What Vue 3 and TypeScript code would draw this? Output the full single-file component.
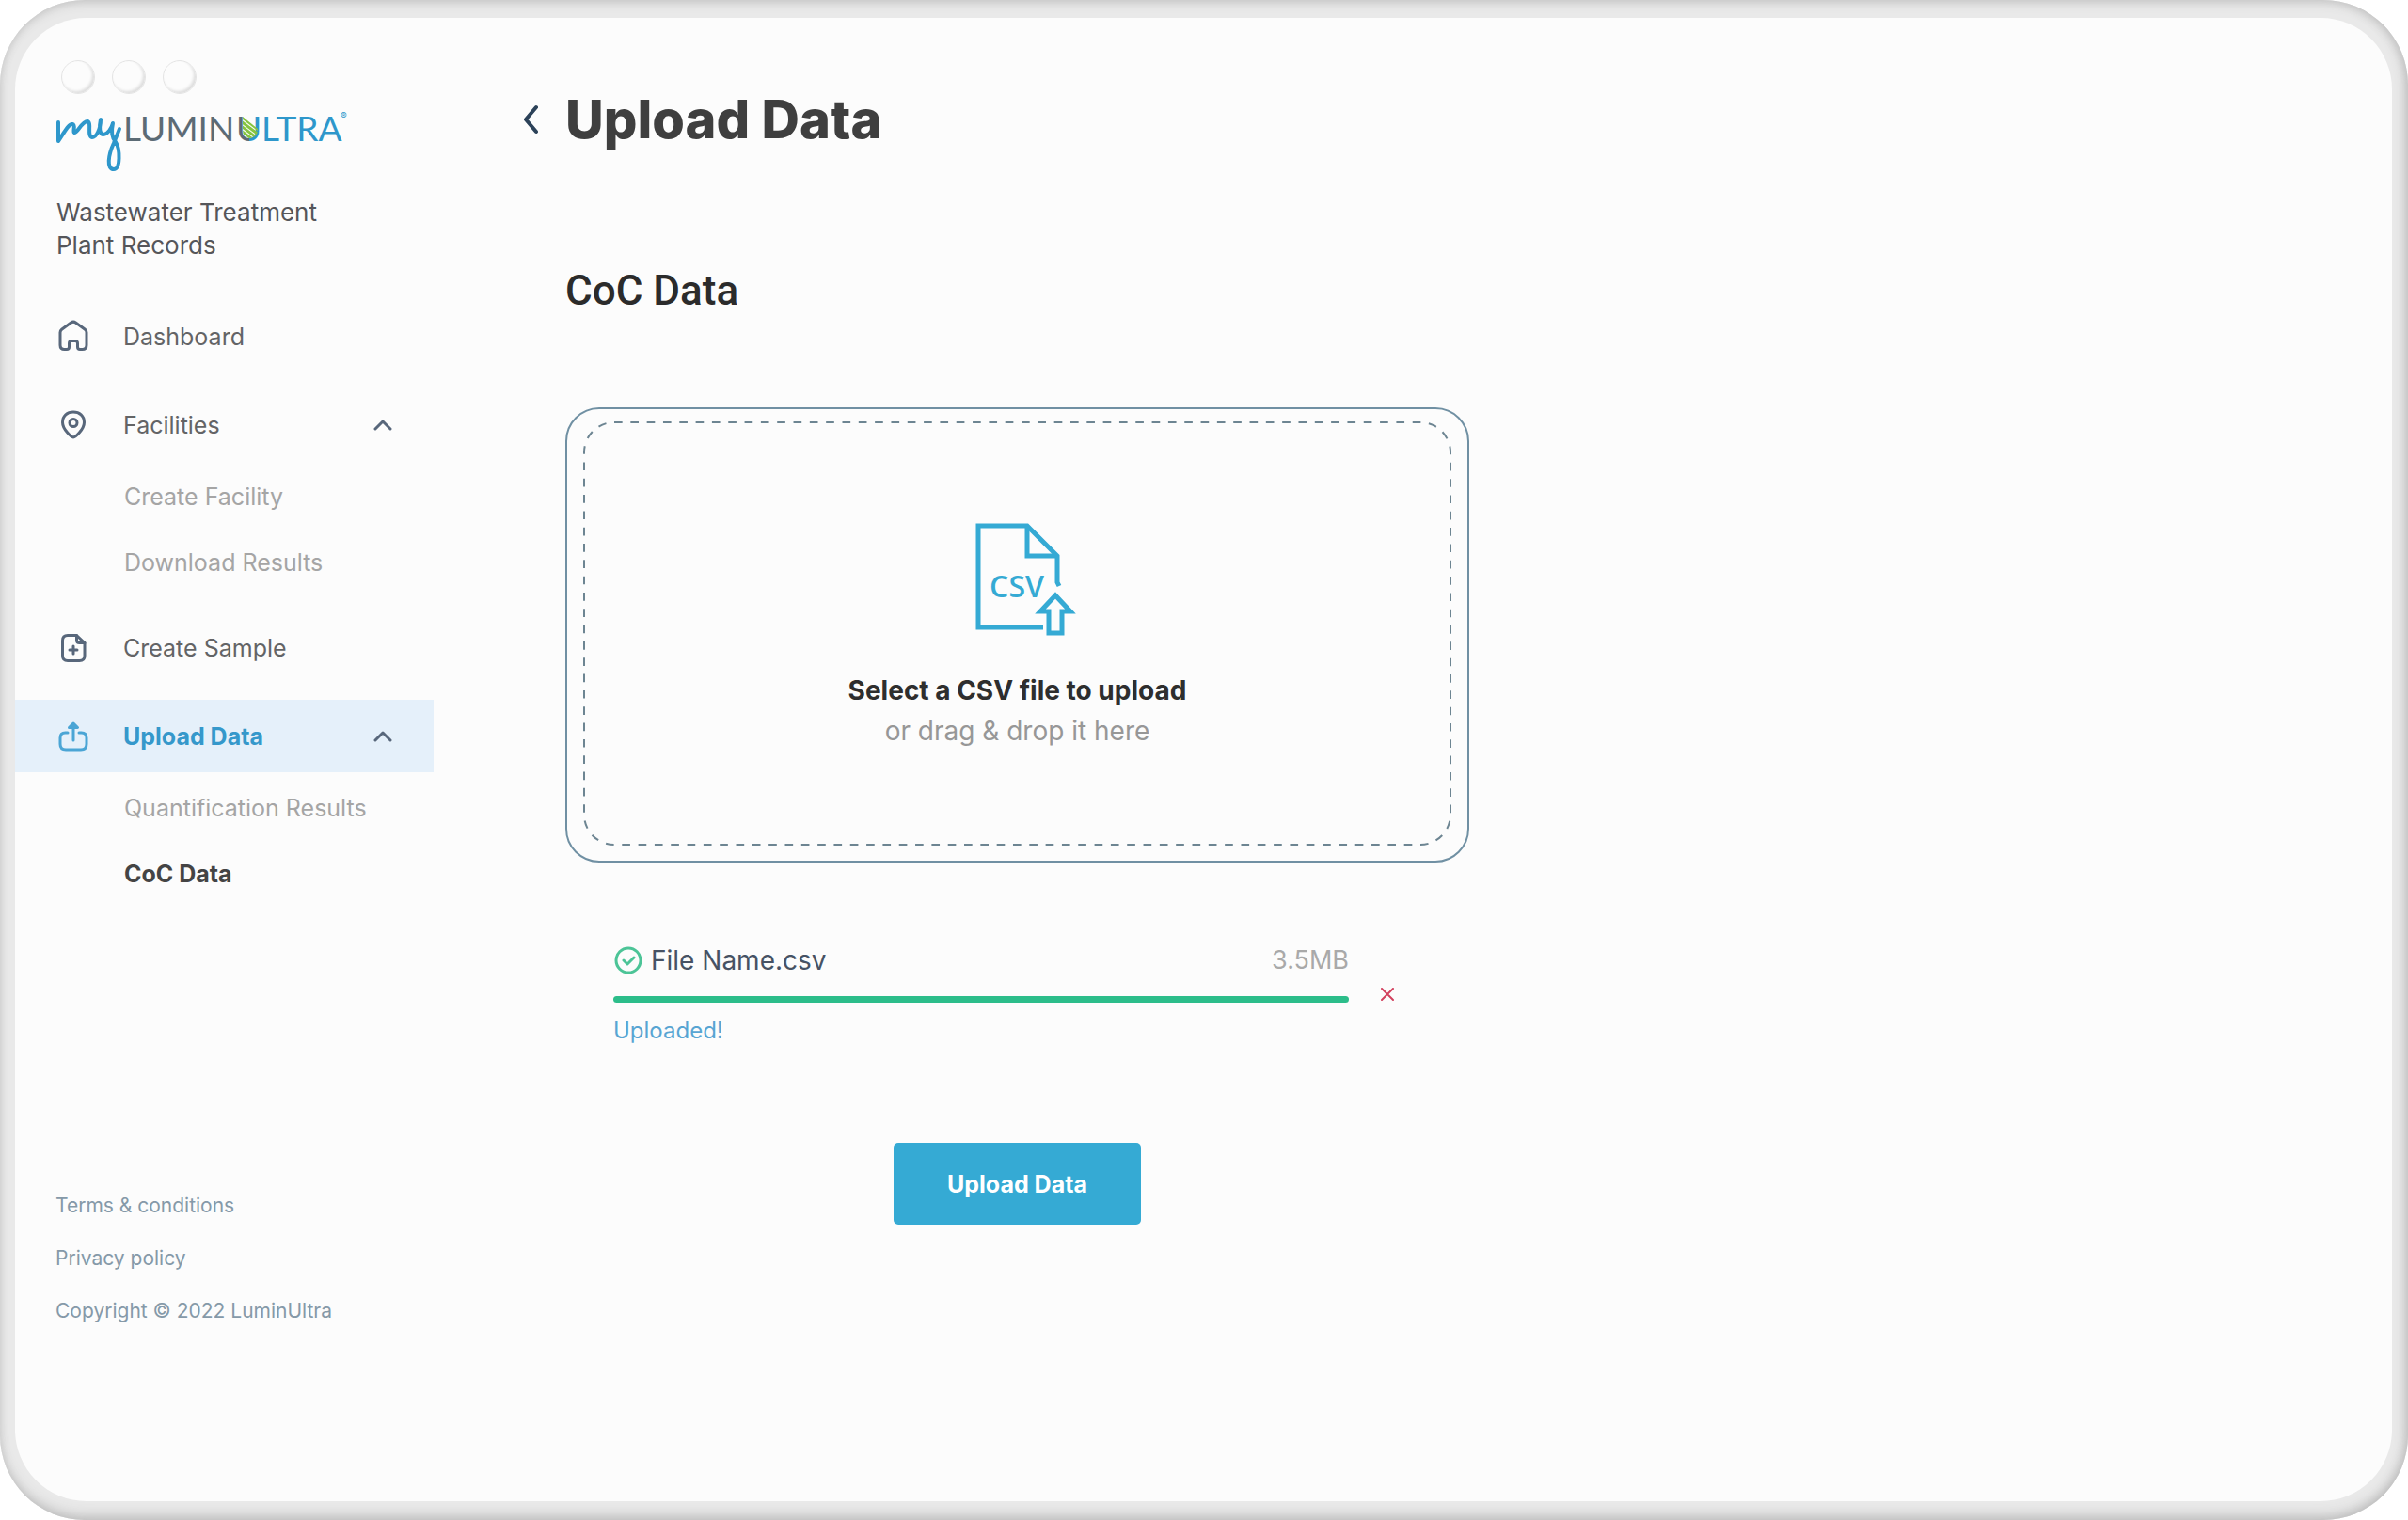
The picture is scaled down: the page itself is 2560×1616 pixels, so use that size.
<script setup lang="ts">
import { ref } from 'vue'

type IconName = 'home' | 'pin' | 'sample' | 'upload'

interface NavItem {
  label: string
  icon: IconName
  active?: boolean
  children?: { label: string; current?: boolean }[]
}

const navItems: NavItem[] = [
  { label: 'Dashboard', icon: 'home' },
  {
    label: 'Facilities',
    icon: 'pin',
    children: [{ label: 'Create Facility' }, { label: 'Download Results' }],
  },
  { label: 'Create Sample', icon: 'sample' },
  {
    label: 'Upload Data',
    icon: 'upload',
    active: true,
    children: [{ label: 'Quantification Results' }, { label: 'CoC Data', current: true }],
  },
]

const open = ref<Record<string, boolean>>({ Facilities: true, 'Upload Data': true })

function toggle(label: string) {
  open.value[label] = !open.value[label]
}

const upload = ref({ name: 'File Name.csv', size: '3.5MB', progress: 100 })
</script>

<template>
  <div class="frame">
    <div class="screen">
      <aside class="sidebar">
        <div class="lights" aria-hidden="true"><i></i><i></i><i></i></div>

        <svg class="logo" viewBox="0 0 320 66" role="img" aria-label="myLuminUltra">
          <defs>
            <linearGradient id="u-fill" x1="0" x2="1" y1="0" y2="0">
              <stop offset="50%" stop-color="#5c6b75" />
              <stop offset="50%" stop-color="#2e97cb" />
            </linearGradient>
            <clipPath id="u-leaf">
              <path d="M199 6 L215 19 V22 Q213 29 206 29 Q199 28 199 20 Z" />
            </clipPath>
          </defs>
          <path
            class="script"
            d="M3 12 V32 C8 25 14 13 18 14 C22 15 18 22 20 23 C23 24 28 11 34 11 C39 12 33 27 39 28 C43 28 48 20 48 9 C46 18 47 25 51 25 C55 25 60 18 61 13 C59 22 60 29 64 33 C69 41 69 62 62 62 C54 62 56 47 62 34 L68 19"
          />
          <text class="word" x="72" y="32" fill="#5c6b75">LUMIN</text>
          <text class="word" x="192" y="32" fill="url(#u-fill)">U</text>
          <text class="word" x="219" y="32" fill="#2e97cb">LTRA</text>
          <g class="leaf" clip-path="url(#u-leaf)">
            <path d="M196 5 L220 23 M196 10 L220 28 M196 15 L220 33 M196 20 L220 38 M196 25 L220 43" />
          </g>
          <text class="mark" x="303" y="9">®</text>
        </svg>

        <p class="org">Wastewater Treatment<br />Plant Records</p>

        <nav class="nav" aria-label="Main">
          <div v-for="item in navItems" :key="item.label" class="group">
            <component
              :is="item.children ? 'button' : 'a'"
              class="row"
              :class="{ active: item.active }"
              :href="item.children ? undefined : '#'"
              :type="item.children ? 'button' : undefined"
              :aria-expanded="item.children ? !!open[item.label] : undefined"
              @click="item.children && toggle(item.label)"
            >
              <svg class="icon" viewBox="0 0 36 36" aria-hidden="true">
                <path
                  v-if="item.icon === 'home'"
                  d="M4 13.500 Q4 11.500 5.600 10.300 L15.500 3 Q18 1.300 20.500 3 L30.400 10.300 Q32 11.500 32 13.500 V27 Q32 31.500 27.500 31.500 H25 Q22.500 31.500 22.500 29 V25 Q22.500 22.500 20 22.500 H16 Q13.500 22.500 13.500 25 V29 Q13.500 31.500 11 31.500 H8.500 Q4 31.500 4 27 Z"
                />
                <template v-else-if="item.icon === 'pin'">
                  <path d="M18 31 C16 31 6.500 22.500 6.500 15 C6.500 8 11.500 4 18 4 C24.500 4 29.500 8 29.500 15 C29.500 22.500 20 31 18 31 Z" />
                  <circle cx="18" cy="15.500" r="4" />
                </template>
                <template v-else-if="item.icon === 'sample'">
                  <path d="M21.500 4.500 H12 Q6.500 4.500 6.500 10 V26 Q6.500 31.500 12 31.500 H24.500 Q30 31.500 30 26 V12.500 Z" />
                  <path d="M21.500 4.500 V9.500 Q21.500 12.500 24.500 12.500 H30 M18 16 V24 M14 20 H22" />
                </template>
                <template v-else>
                  <path d="M12 14 H9.500 Q4 14 4 19.500 V26 Q4 32 10 32 H26 Q32 32 32 26 V19.500 Q32 14 26.500 14 H24 M18 22 V5" />
                  <path d="M13.500 8.500 L18 4 L22.500 8.500 Z" fill="currentColor" />
                </template>
              </svg>
              <span class="label">{{ item.label }}</span>
              <svg v-if="item.children" class="caret" viewBox="0 0 20 12" aria-hidden="true">
                <path d="M2 10 L10 2 L18 10" />
              </svg>
            </component>
            <ul v-if="item.children && open[item.label]" class="sub">
              <li v-for="child in item.children" :key="child.label">
                <a
                  href="#"
                  :class="{ current: child.current }"
                  :aria-current="child.current ? 'page' : undefined"
                >{{ child.label }}</a>
              </li>
            </ul>
          </div>
        </nav>

        <footer class="legal">
          <a href="#">Terms &amp; conditions</a>
          <a href="#">Privacy policy</a>
          <span>Copyright © 2022 LuminUltra</span>
        </footer>
      </aside>

      <main class="main">
        <header class="title">
          <button type="button" class="back" aria-label="Back">
            <svg viewBox="0 0 18 34" aria-hidden="true"><path d="M13 4 L2 17 L13 30" /></svg>
          </button>
          <h1>Upload Data</h1>
        </header>

        <section class="content">
          <h2>CoC Data</h2>

          <label class="drop" for="csv-file">
            <svg class="dashes" aria-hidden="true">
              <rect width="100%" height="100%" rx="32" pathLength="310" />
            </svg>
            <svg class="csv" viewBox="0 0 106 118" aria-hidden="true">
              <path d="M71 110 H2 V2 H54 L86 34 V62 L88 66" />
              <path d="M54 2 V34 H86" />
              <path d="M84 76 L68 93 H77 V116 H91 V93 H100 Z" />
              <text x="43" y="78">CSV</text>
            </svg>
            <strong>Select a CSV file to upload</strong>
            <span>or drag &amp; drop it here</span>
            <input id="csv-file" type="file" accept=".csv" />
          </label>

          <div class="file">
            <div class="file-body">
              <div class="file-head">
                <svg class="check" viewBox="0 0 32 32" aria-hidden="true">
                  <circle cx="16" cy="16" r="13" />
                  <path d="M11 16 L15 20 L22 13" />
                </svg>
                <label for="file-progress">{{ upload.name }}</label>
                <span class="size">{{ upload.size }}</span>
              </div>
              <progress id="file-progress" :value="upload.progress" max="100"></progress>
              <p class="status">Uploaded!</p>
            </div>
            <button type="button" class="remove" aria-label="Remove file">
              <svg viewBox="0 0 14 14" aria-hidden="true"><path d="M1 1 L13 13 M13 1 L1 13" /></svg>
            </button>
          </div>

          <button type="button" class="submit">Upload Data</button>
        </section>
      </main>
    </div>
  </div>
</template>

<style>
body {
  margin: 0;
  background: #fff;
}
</style>

<style scoped>
* {
  box-sizing: border-box;
}

button {
  border: 0;
  padding: 0;
  background: none;
  font: inherit;
  color: inherit;
  cursor: pointer;
}

a {
  color: inherit;
  text-decoration: none;
}

svg {
  display: block;
  fill: none;
  stroke: currentColor;
  stroke-linecap: round;
  stroke-linejoin: round;
}

.frame {
  display: flex;
  min-height: 100vh;
  padding: 19px 17px 20px 16px;
  border-radius: 90px;
  background: #e9e9e9;
  box-shadow:
    inset 0 8px 12px -6px #c4c4c4,
    inset 0 -10px 14px -6px #bcbcbc,
    inset -8px 0 12px -5px #c0c0c0,
    inset 5px 0 8px -4px #d4d4d4;
  font-family: Inter, "Liberation Sans", sans-serif;
  font-size: 25px;
  color: #636466;
}

.screen {
  display: flex;
  flex: 1;
  overflow: hidden;
  border-radius: 76px;
  background: #fcfcfc;
}

.sidebar {
  flex: none;
  width: 445px;
  padding-top: 45px;
}

.lights {
  display: flex;
  gap: 18px;
  padding-left: 49px;
}

.lights i {
  width: 36px;
  height: 36px;
  border: 1px solid #e4e4e4;
  border-radius: 50%;
  background: #fcfcfc;
  box-shadow: inset -2px -2px 3px #dedede;
}

.logo {
  width: 320px;
  height: 66px;
  margin: 18px 0 0 43px;
  overflow: visible;
}

.script {
  stroke: #2e97cb;
  stroke-width: 4;
}

.word {
  stroke: none;
  font-family: Lato, sans-serif;
  font-size: 37px;
}

.leaf {
  stroke: #86c440;
  stroke-width: 3;
}

.mark {
  stroke: none;
  fill: #2e97cb;
  font-size: 10px;
}

.org {
  margin: 24px 0 0 44px;
  font-size: 26px;
  line-height: 35px;
  color: #55565a;
}

.nav {
  display: flex;
  flex-direction: column;
  gap: 17px;
  margin-top: 41px;
}

.row {
  display: flex;
  align-items: center;
  width: 100%;
  height: 77px;
  padding: 0 44px;
  text-align: left;
}

.row.active {
  background: #e5f0fa;
  font-weight: 700;
  color: #3598cb;
}

.icon {
  width: 36px;
  height: 36px;
  margin-right: 35px;
  stroke-width: 3;
  color: #58677b;
}

.active .icon {
  color: #4ba5d5;
}

.label {
  flex: 1;
}

.caret {
  width: 20px;
  height: 12px;
  stroke-width: 3;
  color: #58677b;
}

.sub {
  margin: 0;
  padding: 3px 0 0 116px;
  list-style: none;
  line-height: 70px;
  color: #a5a5a5;
}

.sub a {
  display: block;
}

.sub .current {
  font-weight: 700;
  color: #444;
}

.legal {
  display: flex;
  flex-direction: column;
  margin-top: 290px;
  padding-left: 43px;
  font-size: 21px;
  line-height: 56px;
  color: #8599a8;
}

.main {
  flex: 1;
  min-width: 0;
  padding: 74px 96px 96px;
}

.title {
  display: flex;
  align-items: center;
}

.back {
  width: 44px;
  color: #2c4259;
}

.back svg {
  width: 18px;
  height: 34px;
  stroke-width: 4;
}

h1 {
  margin: 0;
  font-size: 56px;
  font-weight: 800;
  line-height: 68px;
  color: #3f3f3f;
}

.content {
  display: flex;
  flex-direction: column;
  max-width: 1005px;
  padding-left: 44px;
}

h2 {
  margin: 122px 0 98px;
  font-family: Roboto, sans-serif;
  font-size: 44px;
  font-weight: 500;
  line-height: 52px;
  color: #2b2b2b;
}

.drop {
  position: relative;
  display: flex;
  flex-direction: column;
  align-items: center;
  height: 484px;
  padding-top: 122px;
  border: 2px solid #7090a3;
  border-radius: 36px;
  font-size: 28px;
  line-height: 43px;
  color: #979797;
  cursor: pointer;
}

.dashes {
  position: absolute;
  top: 14px;
  left: 18px;
  width: calc(100% - 36px);
  height: calc(100% - 31px);
  overflow: visible;
  stroke: #6d8592;
  stroke-width: 2;
  stroke-linecap: butt;
  stroke-dasharray: 1 1;
}

.csv {
  width: 106px;
  height: 118px;
  margin: 0 0 38px 18px;
  overflow: visible;
  stroke: #35aad4;
  stroke-width: 5;
  stroke-linecap: butt;
  stroke-linejoin: miter;
}

.csv text {
  stroke: none;
  fill: #35aad4;
  font-family: "Open Sans", "Noto Sans", sans-serif;
  font-size: 32px;
  font-weight: 600;
  text-anchor: middle;
}

.drop strong {
  font-weight: 700;
  color: #2e2e2e;
}

.drop input {
  position: absolute;
  width: 1px;
  height: 1px;
  opacity: 0;
}

.file {
  display: flex;
  align-items: center;
  gap: 34px;
  margin: 86px 80px 0 51px;
  line-height: 36px;
}

.file-body {
  flex: 1;
}

.file-head {
  display: flex;
  align-items: center;
  gap: 8px;
  font-size: 28px;
  color: #465264;
}

.check {
  width: 32px;
  height: 32px;
  stroke-width: 3;
  color: #4cc497;
}

.size {
  margin-left: auto;
  font-size: 27px;
  color: #a9a9a9;
}

progress {
  display: block;
  width: 100%;
  height: 7px;
  margin: 20px 0 12px;
  border: 0;
  border-radius: 4px;
  overflow: hidden;
  appearance: none;
  background: #e3e8ea;
}

progress::-webkit-progress-bar {
  background: #e3e8ea;
}

progress::-webkit-progress-value {
  background: #2cbd8a;
}

.status {
  margin: 0;
  font-size: 24px;
  color: #58a5d3;
}

.remove {
  padding-bottom: 4px;
}

.remove svg {
  width: 14px;
  height: 14px;
  stroke-width: 2;
  color: #d2415e;
}

.submit {
  align-self: center;
  width: 263px;
  height: 87px;
  margin-top: 101px;
  border-radius: 5px;
  background: #35aad4;
  font-size: 25px;
  font-weight: 700;
  color: #fff;
}
</style>
